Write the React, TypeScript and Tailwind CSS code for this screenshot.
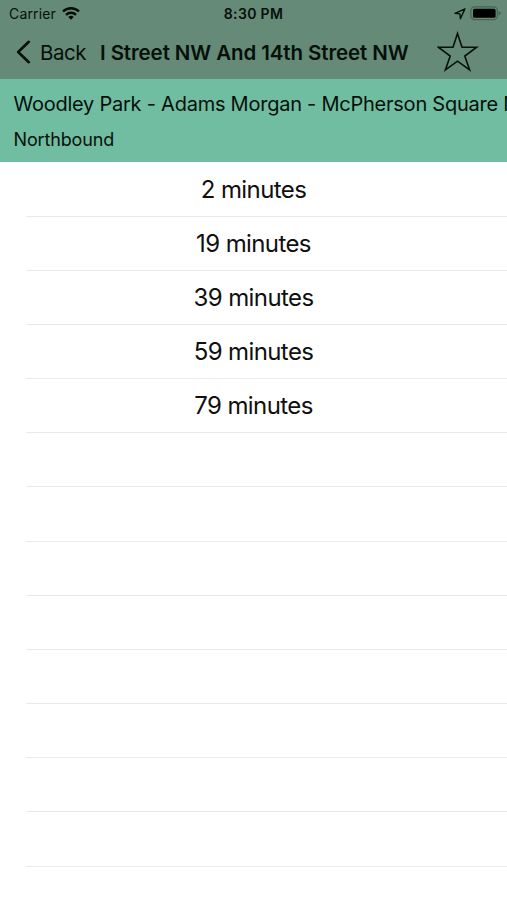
const arrivals = ["2 minutes", "19 minutes", "39 minutes", "59 minutes", "79 minutes"];
const rows = Array.from({ length: 13 }, (_, i) => arrivals[i] ?? "");

function WifiIcon() {
  return (
    <svg className="ml-[6px] h-[14px] w-[18px]" viewBox="0 0 18 14" fill="none" stroke="#050c08" strokeWidth="2.4">
      <path d="M1 4.5a11.4 11.4 0 0 1 16 0" />
      <path d="M4 7.8a7.1 7.1 0 0 1 10 0" />
      <path d="M9 12.8 6.3 10.1a3.9 3.9 0 0 1 5.4 0Z" fill="#050c08" stroke="none" />
    </svg>
  );
}

export default function App() {
  return (
    <main className="h-[900px] w-[507px] overflow-hidden bg-white font-['Inter','Liberation_Sans',sans-serif] text-[#06100b]">
      <header className="h-[79px] bg-[#658a77]">
        <div className="grid h-[27px] grid-cols-3 items-center">
          <div className="flex items-center pl-[9px]">
            <span className="text-[14px] tracking-[0.15px]">Carrier</span>
            <WifiIcon />
          </div>
          <span className="text-center text-[14px] font-semibold tracking-[0.35px]">8:30 PM</span>
          <div className="flex items-center justify-end pr-[6px]">
            <svg className="mr-[4px] h-[12px] w-[12px]" viewBox="0 0 12 12" fill="none" stroke="#06100b" strokeWidth="1.4" strokeLinejoin="round">
              <path d="M11 .8 1 5.4l4.9.5.5 4.9Z" />
            </svg>
            <svg className="h-[15px] w-[31px]" viewBox="0 0 31 15">
              <rect x=".8" y=".8" width="26.6" height="12.8" rx="3.8" fill="none" stroke="#466354" strokeWidth="1.2" />
              <rect x="3" y="2.8" width="22.6" height="9" rx="1.6" fill="#000" />
              <path d="M28.6 4.9q2 .8 2 2.3t-2 2.3Z" fill="#466354" />
            </svg>
          </div>
        </div>
        <div className="flex h-[50px] items-center">
          <svg className="ml-[16px] h-[24px] w-[15px]" viewBox="0 0 15 24" fill="none" stroke="#06100b" strokeWidth="2.6" strokeLinecap="round" strokeLinejoin="round">
            <path d="M12.8 1.8 2.2 12l10.6 10.2" />
          </svg>
          <span className="ml-[9px] w-[60px] whitespace-nowrap pt-[3px] text-[20.5px] tracking-[-0.5px]">Back</span>
          <h1 className="w-[337px] whitespace-nowrap pt-[3px] text-[20.5px] font-semibold tracking-[-0.1px]">I Street NW And 14th Street NW</h1>
          <svg className="h-[42px] w-[42px]" viewBox="0 0 42 42" fill="none" stroke="#06100b" strokeWidth="1.6">
            <path d="M20.5 2.5 25 16.2H39.6L27.8 25 32.6 38.8 20.5 30.2 8.4 38.8 13.2 25 1.4 16.2H16Z" />
          </svg>
        </div>
      </header>
      <section className="h-[83px] overflow-hidden bg-[#70bda1] pl-[13.5px]">
        <p className="h-[50px] whitespace-nowrap text-[20px] leading-[51px] tracking-[-0.24px]">
          Woodley Park - Adams Morgan - McPherson Square Metro
        </p>
        <p className="text-[18px] leading-[22px] tracking-[-0.15px]">Northbound</p>
      </section>
      <ul className="pt-[0.4px]">
        {rows.map((label, i) => (
          <li key={i} className="h-[54.18px] pl-[26px]">
            <div className="flex h-full items-center border-b border-[#e9e9e9]">
              <span className="-ml-[26px] w-[507px] pt-[1.5px] text-center text-[24px] tracking-[-0.6px] text-[#101010]">{label}</span>
            </div>
          </li>
        ))}
      </ul>
    </main>
  );
}
